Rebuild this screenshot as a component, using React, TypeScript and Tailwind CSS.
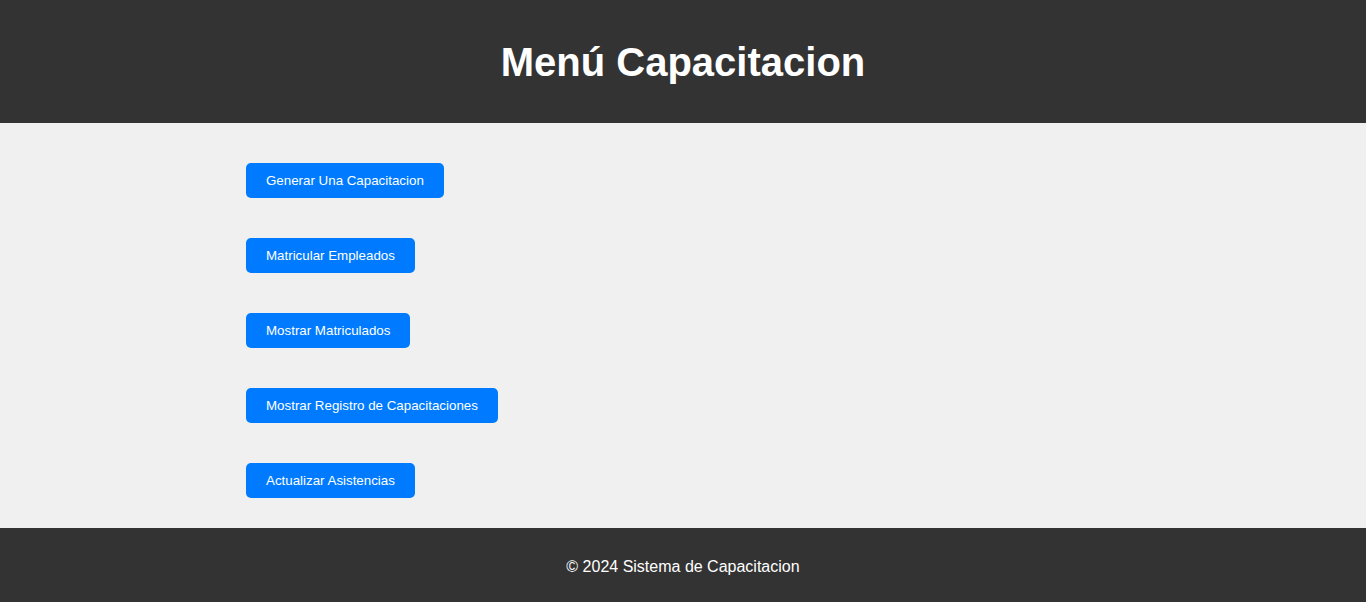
import React from 'react';

const options = [
  'Generar Una Capacitacion',
  'Matricular Empleados',
  'Mostrar Matriculados',
  'Mostrar Registro de Capacitaciones',
  'Actualizar Asistencias',
];

const App: React.FC = () => {
  return (
    <div className="min-h-[602px] flex flex-col bg-[#f0f0f0] font-['Liberation_Sans',Arial,sans-serif]">
      <header className="h-[123px] bg-[#333333] text-white flex items-center justify-center">
        <h1 className="text-[40px] leading-[46px] font-bold">Menú Capacitacion</h1>
      </header>

      <main className="flex-grow w-[874px] mx-auto pt-[40px] pb-[30px] flex flex-col items-start gap-[40px]">
        {options.map((label) => (
          <button
            key={label}
            className="h-[35px] px-[20px] bg-[#007bff] text-white text-[13.33px] leading-[15px] rounded-[5px]"
          >
            {label}
          </button>
        ))}
      </main>

      <footer className="h-[74px] bg-[#333333] text-white text-center text-[16px] leading-[18px] pt-[30px]">
        © 2024 Sistema de Capacitacion
      </footer>
    </div>
  );
};

export default App;
